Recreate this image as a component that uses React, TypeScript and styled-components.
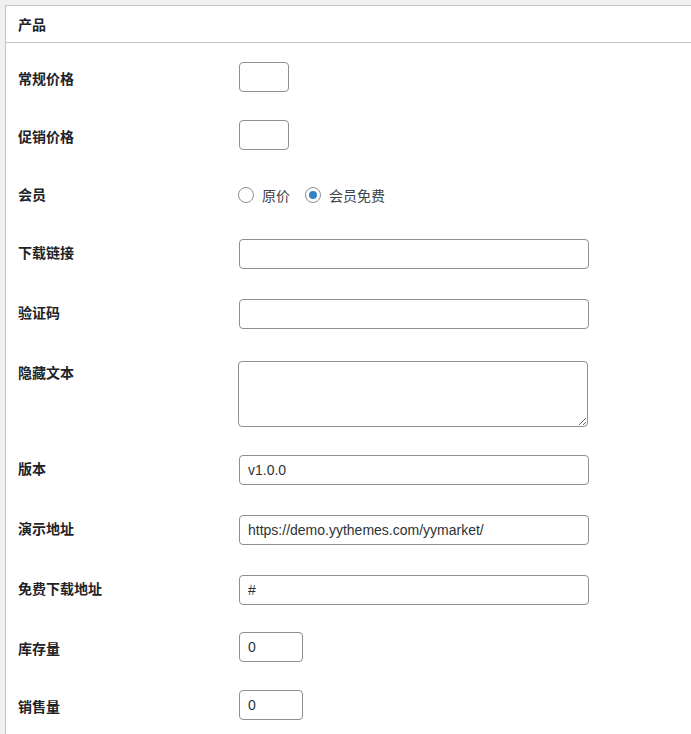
import React from "react";
import styled, { createGlobalStyle } from "styled-components";

const Global = createGlobalStyle`
  html, body {
    margin: 0;
    padding: 0;
    background: #f0f0f1;
    overflow: hidden;
    height: 734px;
  }
  body {
    font-family: "Liberation Sans", "Noto Sans CJK SC", sans-serif;
    font-size: 14px;
    color: #3c434a;
  }
`;

const Page = styled.div`
  padding: 5px 0 0 5px;
  width: 720px;
`;

const Card = styled.section`
  background: #fff;
  border: 1px solid #c3c4c7;
  border-right: none;
  min-height: 800px;
`;

const Header = styled.h2`
  margin: 0;
  height: 36px;
  display: flex;
  align-items: center;
  padding: 0 12px;
  border-bottom: 1px solid #c3c4c7;
  font-size: 14px;
  font-weight: 700;
  line-height: 18px;
  color: #1d2327;
  font-family: "Noto Sans CJK SC", "Liberation Sans", sans-serif;
`;

const Form = styled.div`
  padding: 7px 0 0 12px;
`;

const Row = styled.div`
  display: grid;
  grid-template-columns: 221px 1fr;
  align-items: start;
`;

const Label = styled.div`
  padding-top: 19px;
  line-height: 18px;
  font-size: 14px;
  font-weight: 700;
  color: #1d2327;
  font-family: "Noto Sans CJK SC", "Liberation Sans", sans-serif;
  min-height: 39px;
`;

const Field = styled.div<{ $top: number; $bottom: number }>`
  padding-top: ${(p) => p.$top}px;
  padding-bottom: ${(p) => p.$bottom}px;
  display: flex;
  align-items: center;
`;

const Input = styled.input<{ $w: number }>`
  box-sizing: border-box;
  width: ${(p) => p.$w}px;
  height: 30px;
  margin: 0;
  padding: 0 8px;
  border: 1px solid #8c8f94;
  border-radius: 4px;
  background: #fff;
  font-family: "Liberation Sans", "Noto Sans CJK SC", sans-serif;
  font-size: 14px;
  color: #2c3338;
  outline: none;
`;

const TextArea = styled.textarea`
  box-sizing: border-box;
  display: block;
  width: 350px;
  height: 66px;
  margin: 0 0 0 -1px;
  padding: 2px 6px;
  border: 1px solid #8c8f94;
  border-radius: 4px;
  background: #fff;
  font-family: "Liberation Sans", "Noto Sans CJK SC", sans-serif;
  font-size: 14px;
  color: #2c3338;
  outline: none;
`;

const RadioGroup = styled.div`
  display: flex;
  align-items: center;
  height: 18px;
  margin-top: 20px;
  margin-left: -1px;
`;

const RadioLabel = styled.label`
  display: flex;
  align-items: center;
  gap: 8px;
  margin-right: 15px;
  font-family: "Noto Sans CJK SC", "Liberation Sans", sans-serif;
  font-size: 14px;
  line-height: 18px;
  color: #3c434a;
`;

const Radio = styled.input`
  appearance: none;
  box-sizing: border-box;
  width: 16px;
  height: 16px;
  margin: 0;
  border: 1px solid #8c8f94;
  border-radius: 50%;
  background: #fff;
  display: grid;
  place-items: center;
  &:checked::before {
    content: "";
    width: 8px;
    height: 8px;
    border-radius: 50%;
    background: #3582c4;
  }
`;

type RowDef =
  | { label: string; kind: "num"; value?: string; w: number }
  | { label: string; kind: "text"; value?: string }
  | { label: string; kind: "area" }
  | { label: string; kind: "radio" };

const rows: RowDef[] = [
  { label: "常规价格", kind: "num", w: 50 },
  { label: "促销价格", kind: "num", w: 50 },
  { label: "会员", kind: "radio" },
  { label: "下载链接", kind: "text" },
  { label: "验证码", kind: "text" },
  { label: "隐藏文本", kind: "area" },
  { label: "版本", kind: "text", value: "v1.0.0" },
  { label: "演示地址", kind: "text", value: "https://demo.yythemes.com/yymarket/" },
  { label: "免费下载地址", kind: "text", value: "#" },
  { label: "库存量", kind: "num", value: "0", w: 64 },
  { label: "销售量", kind: "num", value: "0", w: 64 },
];

function renderField(r: RowDef) {
  switch (r.kind) {
    case "num":
      return (
        <Field $top={12} $bottom={16}>
          <Input $w={r.w} defaultValue={r.value ?? ""} />
        </Field>
      );
    case "text":
      return (
        <Field $top={15} $bottom={15}>
          <Input $w={350} defaultValue={r.value ?? ""} />
        </Field>
      );
    case "area":
      return (
        <Field $top={17} $bottom={13}>
          <TextArea />
        </Field>
      );
    case "radio":
      return (
        <RadioGroup>
          <RadioLabel>
            <Radio type="radio" name="member" value="0" />
            原价
          </RadioLabel>
          <RadioLabel>
            <Radio type="radio" name="member" value="1" defaultChecked />
            会员免费
          </RadioLabel>
        </RadioGroup>
      );
  }
}

export default function App() {
  return (
    <Page>
      <Global />
      <Card>
        <Header>产品</Header>
        <Form>
          {rows.map((r) => (
            <Row key={r.label}>
              <Label>{r.label}</Label>
              {renderField(r)}
            </Row>
          ))}
        </Form>
      </Card>
    </Page>
  );
}
